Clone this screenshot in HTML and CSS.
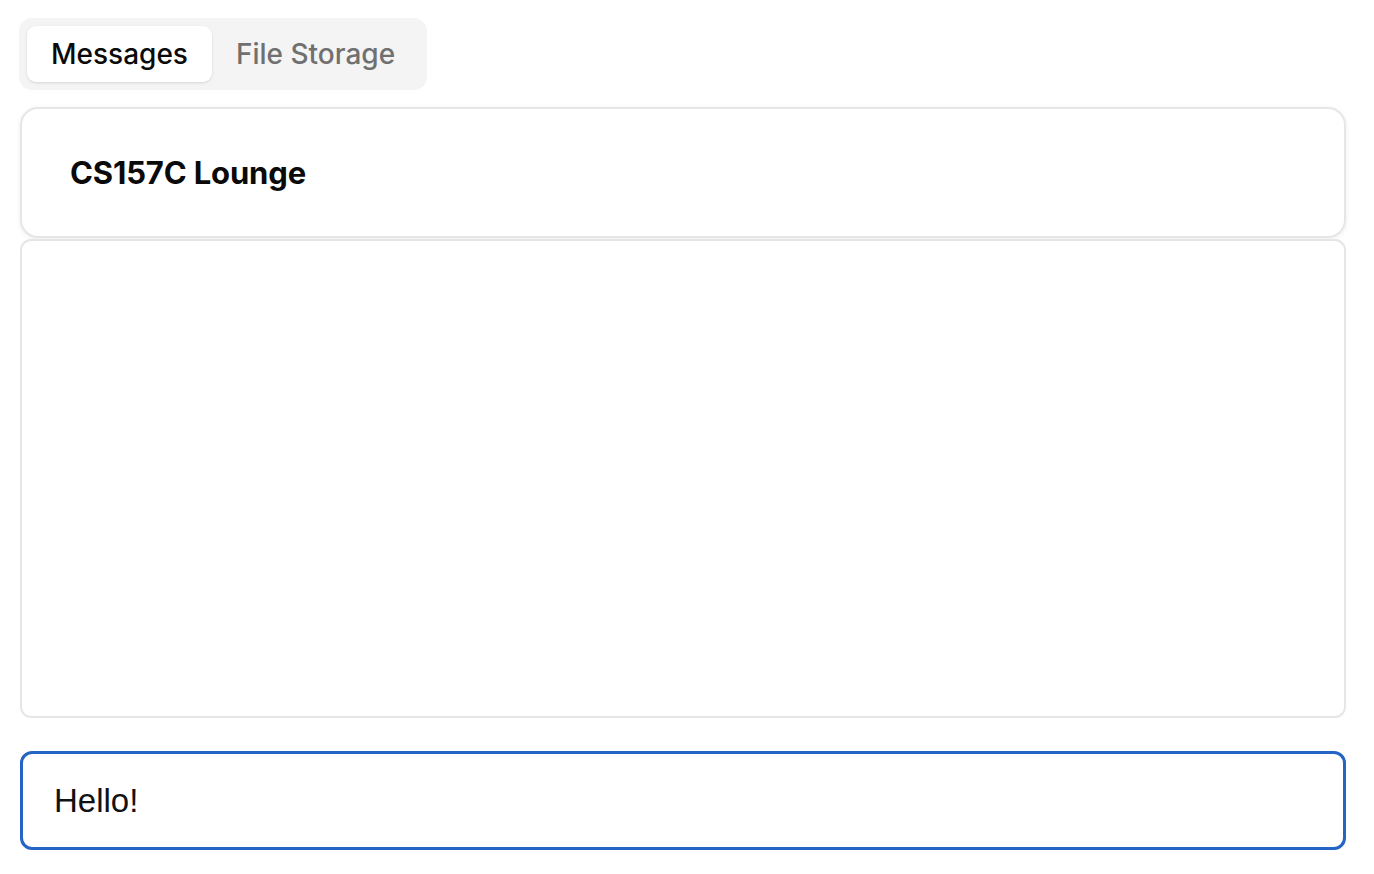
FILE: index.html
```html
<!DOCTYPE html>
<html lang="en">
<head>
<meta charset="utf-8">
<title>CS157C Lounge</title>
<link rel="stylesheet" href="styles.css">
</head>
<body>
<div class="page">
  <div class="tabs">
    <div class="tab active">Messages</div>
    <div class="tab">File Storage</div>
  </div>
  <div class="header-card">
    <h1 class="title">CS157C Lounge</h1>
  </div>
  <div class="messages"></div>
  <div class="composer">
    <input class="input" type="text" value="Hello!">
  </div>
</div>
</body>
</html>
```
FILE: styles.css
```css
html, body {
  margin: 0;
  padding: 0;
  background: #ffffff;
}
.page {
  padding: 18px 28px 0 20px;
  display: flex;
  flex-direction: column;
  font-family: Inter, "Noto Sans", sans-serif;
}
.tabs {
  align-self: flex-start;
  display: flex;
  background: #f4f4f4;
  border-radius: 13px;
  padding: 8px;
  margin-left: -1px;
}
.tab {
  height: 56px;
  padding: 0 24px;
  display: flex;
  align-items: center;
  font-size: 28px;
  font-weight: 500;
  color: #707070;
  border-radius: 9px;
}
.tab.active {
  padding: 0 24px;
  background: #ffffff;
  color: #0a0a0a;
  box-shadow: 0 1px 3px rgba(0,0,0,0.12);
}
.header-card {
  margin-top: 17px;
  height: 127px;
  border: 2px solid #e6e6e6;
  border-radius: 18px;
  box-shadow: 0 1px 4px rgba(0,0,0,0.08);
  display: flex;
  align-items: center;
  padding: 0 48px;
}
.title {
  margin: 0;
  font-size: 31px;
  font-weight: 700;
  color: #0a0a0a;
  letter-spacing: -0.15px;
}
.messages {
  margin-top: 1px;
  height: 475px;
  border: 2px solid #e6e6e6;
  border-radius: 11px;
}
.composer {
  margin-top: 33px;
}
.input {
  box-sizing: border-box;
  width: 100%;
  height: 99px;
  border: 3px solid #2563c4;
  border-radius: 12px;
  padding: 0 31px;
  font-family: "Liberation Sans", Arial, sans-serif;
  font-size: 33px;
  color: #111111;
  outline: none;
  background: #ffffff;
}
```
